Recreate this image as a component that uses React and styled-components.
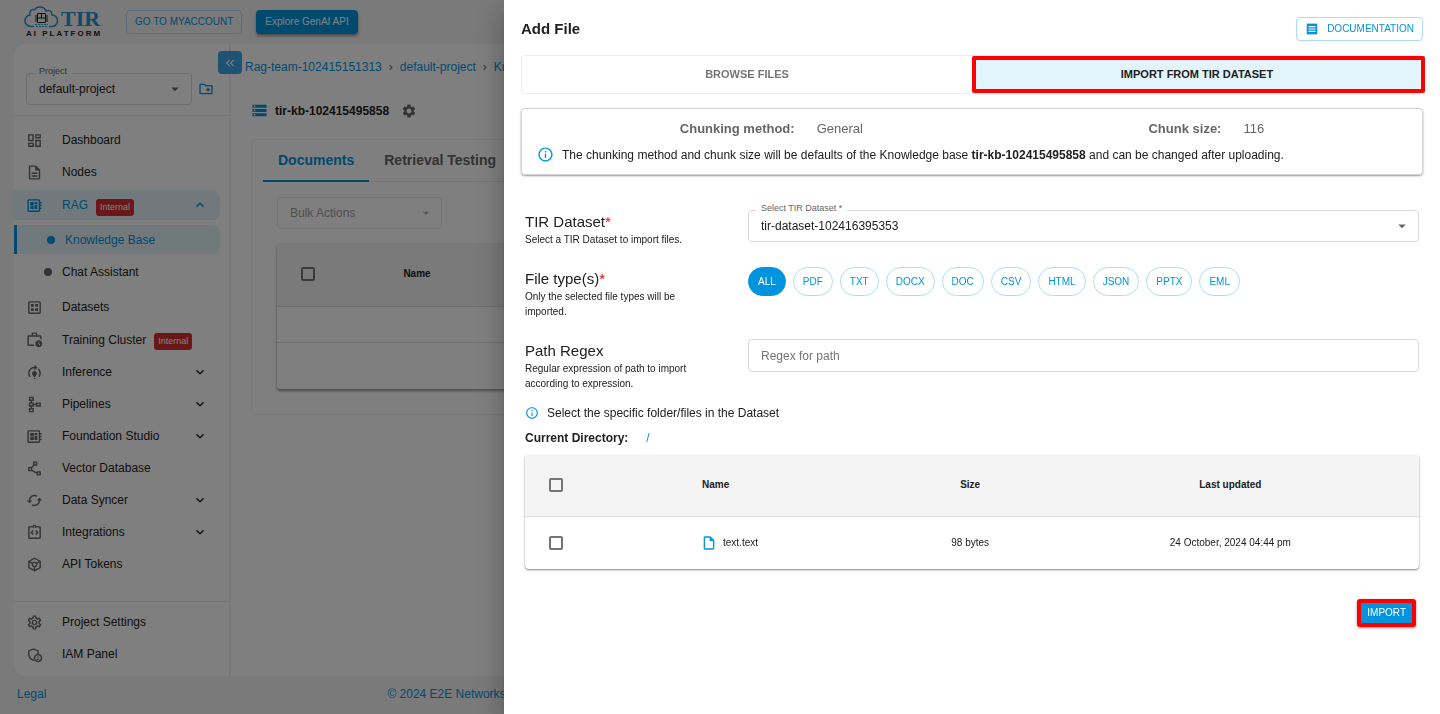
import React from "react";
import styled, { createGlobalStyle, css } from "styled-components";
import {
  MdArrowDropDown,
  MdCached,
  MdInfoOutline,
  MdKeyboardArrowDown,
  MdKeyboardArrowUp,
  MdKeyboardDoubleArrowLeft,
  MdModelTraining,
  MdOutlineAdminPanelSettings,
  MdOutlineCreateNewFolder,
  MdOutlineDashboard,
  MdOutlineDataset,
  MdOutlineDescription,
  MdOutlineDeveloperBoard,
  MdOutlineInsertDriveFile,
  MdOutlineIntegrationInstructions,
  MdOutlinePolyline,
  MdOutlineSchema,
  MdOutlineSettings,
  MdOutlineToken,
  MdOutlineWorkHistory,
  MdReceipt,
  MdSettings,
  MdStorage,
} from "react-icons/md";

const blue = "#0094de";
const ink = "#212121";
const muted = "#666666";
const line = "#e0e0e0";
const softLine = "#ebebeb";

const GlobalStyle = createGlobalStyle`
  *, *::before, *::after { box-sizing: border-box; }
  body {
    margin: 0;
    overflow: hidden;
    font-family: "Liberation Sans", Arial, sans-serif;
    font-size: 12px;
    line-height: 16px;
    color: ${ink};
    background: #f4f4f5;
  }
  button, input, select { font: inherit; color: inherit; margin: 0; }
  button { cursor: pointer; }
  a { color: ${blue}; text-decoration: none; }
  svg { display: block; flex: none; }
  h1, h2, h3, p { margin: 0; }
`;

/* ---------- page behind the drawer ---------- */

const Page = styled.div`
  display: flex;
  flex-direction: column;
  min-height: 100vh;
`;

const TopBar = styled.header`
  display: flex;
  align-items: center;
  height: 44px;
  padding-left: 24px;
`;

const Logo = styled.a`
  display: flex;
  flex-direction: column;
  width: 87px;
  margin-right: 15px;
  color: ${ink};
`;

const LogoTop = styled.span`
  display: flex;
  gap: 2px;
  height: 24px;
`;

const LogoWord = styled.span`
  font: bold 22px/26px "Liberation Serif", serif;
  color: #2a93cf;
`;

const LogoTagline = styled.span`
  padding-left: 2px;
  font-size: 8px;
  line-height: 8px;
  font-weight: bold;
  letter-spacing: 2px;
  white-space: nowrap;
`;

const OutlinedButton = styled.button`
  display: inline-flex;
  align-items: center;
  justify-content: center;
  gap: 8px;
  height: 24px;
  padding: 0 8px;
  border: 1px solid #b0dbf5;
  border-radius: 4px;
  background: transparent;
  color: ${blue};
  font-size: 10px;
`;

const FilledButton = styled.button`
  height: 24px;
  padding: 0 9px;
  border: 0;
  border-radius: 4px;
  background: ${blue};
  color: #ffffff;
  font-size: 10px;
  box-shadow: 0 2px 3px rgba(0, 0, 0, 0.4);
`;

const TopActions = styled.div`
  display: flex;
  gap: 14px;
`;

const Workspace = styled.div`
  display: flex;
  flex: 1;
  margin: 0 14px;
  border-radius: 10px;
  background: #ffffff;
`;

const Sidebar = styled.aside`
  position: relative;
  display: flex;
  flex-direction: column;
  width: 217px;
  border-right: 2px solid #f0f0f0;
`;

const CollapseButton = styled.button`
  position: absolute;
  top: 7px;
  right: -13px;
  display: grid;
  place-items: center;
  width: 24px;
  height: 23px;
  padding: 0;
  border: 0;
  border-radius: 4px;
  background: #3ca6e8;
  color: #ffffff;
`;

const ProjectBar = styled.div`
  display: flex;
  align-items: center;
  gap: 6px;
  padding: 29px 12px 10px;
  border-bottom: 1px solid ${softLine};
`;

const IconButton = styled.button`
  display: grid;
  place-items: center;
  padding: 0;
  border: 0;
  background: transparent;
  color: ${(p) => (p.$muted ? muted : blue)};
`;

const Field = styled.div`
  position: relative;
  display: flex;
  align-items: center;
  flex: ${(p) => (p.$width ? "none" : "1")};
  width: ${(p) => p.$width || "auto"};
  color: ${(p) => (p.$disabled ? "#b0b0b0" : muted)};

  svg {
    position: absolute;
    right: 8px;
    pointer-events: none;
  }
`;

const FieldLabel = styled.label`
  position: absolute;
  top: -10px;
  left: 8px;
  padding: 0 5px;
  background: #ffffff;
  color: ${muted};
  font-size: 9px;
`;

const controlStyle = css`
  width: 100%;
  height: 32px;
  padding: 0 12px;
  border: 1px solid ${(p) => (p.disabled ? "#ebebeb" : "#d8d8d8")};
  border-radius: 4px;
  background: transparent;
  outline: 0;
`;

const Select = styled.select`
  ${controlStyle}
  appearance: none;
  color: ${(p) => (p.disabled ? "#9e9e9e" : ink)};
  opacity: 1;
`;

const TextInput = styled.input`
  ${controlStyle}
  height: 33px;
  &::placeholder { color: #757575; opacity: 1; }
`;

const Nav = styled.nav`
  display: flex;
  flex-direction: column;
  padding: ${(p) => (p.$bottom ? "4px 0 6px" : "8px 0 21px")};
  border-top: ${(p) => (p.$bottom ? `1px solid ${softLine}` : "0")};
`;

const NavItem = styled.a`
  display: flex;
  align-items: center;
  height: ${(p) => (p.$tall ? "33px" : "32px")};
  padding: 0 12px;
  color: ${(p) => (p.$active ? blue : ink)};
  margin-right: 9px;

  > svg:first-child {
    width: 17px;
    height: 17px;
    margin-right: 19px;
    color: ${(p) => (p.$active ? blue : muted)};
  }
`;

const NavGroup = styled(NavItem)`
  height: 30px;
  margin-top: 2px;
  border-radius: 0 8px 8px 0;
  background: #e3f2fb;
`;

const SubItem = styled(NavItem)`
  height: ${(p) => (p.$active ? "29px" : "32px")};
  margin-top: ${(p) => (p.$active ? "5px" : "2px")};
  margin-bottom: ${(p) => (p.$active ? "0" : "3px")};
  padding-left: 30px;
  gap: 10px;
  ${(p) =>
    p.$active &&
    css`
      border-left: 3px solid ${blue};
      border-radius: 0 8px 8px 0;
      background: #e3f2fb;
    `}

  &::before {
    content: "";
    width: 8px;
    height: 8px;
    border-radius: 50%;
    background: ${(p) => (p.$active ? blue : muted)};
  }
`;

const Chevron = styled.span`
  margin-left: auto;
`;

const Badge = styled.span`
  margin: 4px 0 0 8px;
  padding: 0 4px;
  border-radius: 3px;
  background: #d32f2f;
  color: #ffffff;
  font-size: 9px;
  line-height: 17px;
`;

const Content = styled.main`
  flex: 1;
  min-width: 0;
  padding: 15px 14px 0;
`;

const Breadcrumbs = styled.nav`
  display: flex;
  gap: 7px;
  white-space: nowrap;

  span { color: ${muted}; }
`;

const TitleRow = styled.div`
  display: flex;
  align-items: center;
  gap: 7px;
  margin: 27px 6px 20px;
  font-weight: bold;
`;

const TitleText = styled.h1`
  margin-right: 5px;
  font-size: 12px;
`;

const Card = styled.section`
  margin-left: 6px;
  height: 276px;
  padding: 0 11px;
  border: 1px solid #f0f0f0;
  border-radius: 4px;
`;

const PageTabs = styled.div`
  display: flex;
  height: 42px;
  border-bottom: 1px solid ${softLine};
`;

const PageTab = styled.button`
  height: 42px;
  padding: 0 15px;
  border: 0;
  border-bottom: 2px solid ${(p) => (p.$active ? blue : "transparent")};
  background: transparent;
  color: ${(p) => (p.$active ? blue : muted)};
  font-size: 14px;
  font-weight: bold;
`;

const CardBody = styled.div`
  padding: 15px 14px;
`;

const DocumentsTable = styled.table`
  width: 100%;
  margin-top: 14px;
  border-collapse: collapse;
  table-layout: fixed;
  border-radius: 4px;
  box-shadow: 0 2px 3px rgba(0, 0, 0, 0.4);
  font-size: 10px;

  th { height: 63px; padding: 0; background: #f4f4f4; }
  th:first-child { width: 64px; }
  th:nth-child(2) { width: 152px; }
  td { height: 36px; border-top: 1px solid ${line}; }
  tr:last-child td { height: 47px; }
`;

const Checkbox = styled.input`
  display: block;
  appearance: none;
  width: 14px;
  height: 14px;
  margin: 0 0 0 24px;
  border: 2px solid #757575;
  border-radius: 2px;
  background: transparent;
  &:checked { background: ${blue}; border-color: ${blue}; }
`;

const Footer = styled.footer`
  display: flex;
  align-items: center;
  height: 38px;
  padding: 0 17px 3px;
  color: ${blue};

  span { margin-left: 341px; }
`;

/* ---------- drawer ---------- */

const Backdrop = styled.div`
  position: fixed;
  inset: 0;
  background: rgba(0, 0, 0, 0.5);
`;

const Drawer = styled.section`
  position: fixed;
  top: 0;
  right: 0;
  bottom: 0;
  width: 65%;
  padding: 0 17px;
  overflow: auto;
  background: #ffffff;
  box-shadow: 0 8px 10px -5px rgba(0, 0, 0, 0.2),
    0 16px 24px 2px rgba(0, 0, 0, 0.14), 0 6px 30px 5px rgba(0, 0, 0, 0.12);
`;

const DrawerHeader = styled.header`
  display: flex;
  align-items: center;
  justify-content: space-between;
  padding: 17px 0 14px;

  h2 { font-size: 15px; line-height: 20px; }
`;

const ImportTabs = styled.div`
  display: grid;
  grid-template-columns: 1fr 1fr;
  height: 39px;
  border: 1px solid #ececec;
  border-radius: 4px;
`;

const ImportTab = styled.button`
  position: relative;
  padding: 0 0 2px;
  border: 0;
  background: ${(p) => (p.$active ? "#e3f4fd" : "transparent")};
  color: ${(p) => (p.$active ? ink : "#757575")};
  font-size: 11px;
  font-weight: bold;

  ${(p) =>
    p.$active &&
    css`
      &::after {
        content: "";
        position: absolute;
        inset: 0 -3px 0 0;
        border: 4px solid #ff0000;
        border-radius: 2px;
      }
    `}
`;

const InfoCard = styled.div`
  margin-top: 14px;
  padding: 12px 15px 11px;
  border: 1px solid #d4d4d4;
  border-radius: 4px;
  box-shadow: 0 1px 2px rgba(0, 0, 0, 0.4);
`;

const ChunkRow = styled.dl`
  display: flex;
  justify-content: space-around;
  margin: 0 0 9px;
  color: ${muted};
  font-size: 13px;

  div { display: flex; gap: 22px; }
  dt { font-weight: bold; }
  dd { margin: 0; }
`;

const Note = styled.p`
  display: flex;
  align-items: center;
  gap: 8px;

  svg { color: ${blue}; }
`;

const Form = styled.form`
  display: flex;
  flex-direction: column;
  padding: 35px 4px 0;
`;

const FormRow = styled.div`
  display: grid;
  grid-template-columns: 223px 1fr;
  align-items: start;
  margin-bottom: 20px;
`;

const FormLabel = styled.div`
  padding-top: 2px;
  max-width: 180px;

  h3 { font-size: 15px; line-height: 20px; font-weight: normal; }
  h3 span { color: #ff0000; }
  p { font-size: 10px; line-height: 15px; }
`;

const Chips = styled.div`
  display: flex;
  flex-wrap: wrap;
  gap: 7px;
`;

const Chip = styled.button`
  height: 29px;
  padding: 0 9px;
  border: 1px solid ${(p) => (p.$active ? blue : "#b0dbf5")};
  border-radius: 15px;
  background: ${(p) => (p.$active ? blue : "#ffffff")};
  color: ${(p) => (p.$active ? "#ffffff" : blue)};
  font-size: 10px;
`;

const SelectNote = styled(Note)`
  margin-top: -6px;
`;

const Directory = styled.div`
  display: flex;
  gap: 18px;
  margin: 9px 0;
  font-weight: bold;

  a { font-weight: normal; }
`;

const FileTable = styled.table`
  width: 100%;
  border-collapse: collapse;
  table-layout: fixed;
  border-radius: 4px;
  overflow: hidden;
  box-shadow: 0 1px 2px rgba(0, 0, 0, 0.5);
  font-size: 10px;
  text-align: center;

  th { height: 61px; padding: 0; background: #f4f4f4; }
  td { height: 53px; padding: 0; border-top: 1px solid ${line}; }
  th:nth-child(1) { width: 177px; }
  th:nth-child(2) { width: 22%; }
  th:nth-child(3) { width: 16%; }
  th:nth-child(2), td:nth-child(2) { text-align: left; }
`;

const FileName = styled.span`
  display: flex;
  align-items: center;
  gap: 6px;

  svg { color: ${blue}; margin-left: -1px; }
`;

const FormActions = styled.div`
  display: flex;
  justify-content: flex-end;
  padding: 30px 3px;
`;

const ImportButton = styled.button`
  height: 28px;
  padding: 0 6px;
  border: 4px solid #ff0000;
  border-radius: 3px;
  background: ${blue};
  color: #ffffff;
  font-size: 10px;
  box-shadow: 0 1px 3px rgba(0, 0, 0, 0.4);
`;

const navItems = [
  { label: "Datasets", icon: MdOutlineDataset },
  { label: "Training Cluster", icon: MdOutlineWorkHistory, badge: true },
  { label: "Inference", icon: MdModelTraining, expands: true },
  { label: "Pipelines", icon: MdOutlineSchema, expands: true },
  { label: "Foundation Studio", icon: MdOutlineDeveloperBoard, expands: true },
  { label: "Vector Database", icon: MdOutlinePolyline },
  { label: "Data Syncer", icon: MdCached, expands: true },
  { label: "Integrations", icon: MdOutlineIntegrationInstructions, expands: true },
  { label: "API Tokens", icon: MdOutlineToken },
];

const fileTypes = ["ALL", "PDF", "TXT", "DOCX", "DOC", "CSV", "HTML", "JSON", "PPTX", "EML"];

function CloudMark() {
  return (
    <svg width="35" height="23" viewBox="0 0 35 23" fill="none">
      <path
        d="M10 20.500H7C3.500 20.500 1 18 1 15C1 11.500 3 9.500 6 9C5 5 7.500 3 11 3.500C13 0 20 0 22 5C25 3.500 28 5 28 9C31.500 9.500 33.500 12 33.500 15C33.500 18 31 20.500 28 20.500H25"
        stroke="#2a93cf"
        strokeWidth="1.500"
      />
      <path
        d="M13.500 7.500H21.500V16.500H13.500ZM13.500 12H21.500M17.500 7.500V12M12 9V16M23 9V16"
        stroke="#222222"
        strokeWidth="1"
      />
      <path d="M11 18.500H24M12 20.500H23" stroke="#2a93cf" strokeWidth="1" strokeDasharray="2 1" />
    </svg>
  );
}

function SideNavItem({ item }) {
  const Icon = item.icon;
  return (
    <NavItem href="#" $tall={item.badge}>
      <Icon />
      {item.label}
      {item.badge && <Badge>Internal</Badge>}
      {item.expands && (
        <Chevron>
          <MdKeyboardArrowDown size={16} />
        </Chevron>
      )}
    </NavItem>
  );
}

export default function App() {
  return (
    <>
      <GlobalStyle />
      <Page>
        <TopBar>
          <Logo href="#">
            <LogoTop>
              <CloudMark />
              <LogoWord>TIR</LogoWord>
            </LogoTop>
            <LogoTagline>AI PLATFORM</LogoTagline>
          </Logo>
          <TopActions>
            <OutlinedButton>GO TO MYACCOUNT</OutlinedButton>
            <FilledButton>Explore GenAI API</FilledButton>
          </TopActions>
        </TopBar>

        <Workspace>
          <Sidebar>
            <CollapseButton aria-label="Collapse sidebar">
              <MdKeyboardDoubleArrowLeft size={14} />
            </CollapseButton>
            <ProjectBar>
              <Field $width="166px">
                <FieldLabel htmlFor="project">Project</FieldLabel>
                <Select id="project">
                  <option>default-project</option>
                </Select>
                <MdArrowDropDown size={18} />
              </Field>
              <IconButton aria-label="Create project">
                <MdOutlineCreateNewFolder size={16} />
              </IconButton>
            </ProjectBar>
            <Nav>
              <SideNavItem item={{ label: "Dashboard", icon: MdOutlineDashboard }} />
              <SideNavItem item={{ label: "Nodes", icon: MdOutlineDescription }} />
              <NavGroup href="#" $active>
                <MdOutlineDeveloperBoard />
                RAG
                <Badge>Internal</Badge>
                <Chevron>
                  <MdKeyboardArrowUp size={16} />
                </Chevron>
              </NavGroup>
              <SubItem href="#" $active>Knowledge Base</SubItem>
              <SubItem href="#">Chat Assistant</SubItem>
              {navItems.map((item) => (
                <SideNavItem key={item.label} item={item} />
              ))}
            </Nav>
            <Nav $bottom>
              <SideNavItem item={{ label: "Project Settings", icon: MdOutlineSettings }} />
              <SideNavItem item={{ label: "IAM Panel", icon: MdOutlineAdminPanelSettings }} />
            </Nav>
          </Sidebar>

          <Content>
            <Breadcrumbs>
              <a href="#">Rag-team-102415151313</a>
              <span>›</span>
              <a href="#">default-project</a>
              <span>›</span>
              <a href="#">Knowledge Base</a>
            </Breadcrumbs>
            <TitleRow>
              <MdStorage size={17} color={blue} />
              <TitleText>tir-kb-102415495858</TitleText>
              <IconButton $muted aria-label="Settings">
                <MdSettings size={16} />
              </IconButton>
            </TitleRow>
            <Card>
              <PageTabs>
                <PageTab $active>Documents</PageTab>
                <PageTab>Retrieval Testing</PageTab>
              </PageTabs>
              <CardBody>
                <Field $width="165px" $disabled>
                  <Select disabled aria-label="Bulk Actions">
                    <option>Bulk Actions</option>
                  </Select>
                  <MdArrowDropDown size={16} />
                </Field>
                <DocumentsTable>
                  <thead>
                    <tr>
                      <th><Checkbox type="checkbox" aria-label="Select all documents" /></th>
                      <th>Name</th>
                      <th />
                    </tr>
                  </thead>
                  <tbody>
                    <tr><td colSpan={3} /></tr>
                    <tr><td colSpan={3} /></tr>
                  </tbody>
                </DocumentsTable>
              </CardBody>
            </Card>
          </Content>
        </Workspace>

        <Footer>
          <a href="#">Legal</a>
          <span>© 2024 E2E Networks</span>
        </Footer>
      </Page>

      <Backdrop />

      <Drawer role="dialog" aria-label="Add File">
        <DrawerHeader>
          <h2>Add File</h2>
          <OutlinedButton>
            <MdReceipt size={14} />
            DOCUMENTATION
          </OutlinedButton>
        </DrawerHeader>

        <ImportTabs role="tablist">
          <ImportTab role="tab">BROWSE FILES</ImportTab>
          <ImportTab role="tab" aria-selected="true" $active>IMPORT FROM TIR DATASET</ImportTab>
        </ImportTabs>

        <InfoCard>
          <ChunkRow>
            <div><dt>Chunking method:</dt><dd>General</dd></div>
            <div><dt>Chunk size:</dt><dd>116</dd></div>
          </ChunkRow>
          <Note>
            <MdInfoOutline size={17} />
            <span>
              The chunking method and chunk size will be defaults of the Knowledge base{" "}
              <b>tir-kb-102415495858</b> and can be changed after uploading.
            </span>
          </Note>
        </InfoCard>

        <Form onSubmit={(e) => e.preventDefault()}>
          <FormRow>
            <FormLabel>
              <h3>TIR Dataset<span>*</span></h3>
              <p>Select a TIR Dataset to import files.</p>
            </FormLabel>
            <Field>
              <FieldLabel htmlFor="dataset">Select TIR Dataset *</FieldLabel>
              <Select id="dataset">
                <option>tir-dataset-102416395353</option>
              </Select>
              <MdArrowDropDown size={18} />
            </Field>
          </FormRow>

          <FormRow>
            <FormLabel>
              <h3>File type(s)<span>*</span></h3>
              <p>Only the selected file types will be imported.</p>
            </FormLabel>
            <Chips>
              {fileTypes.map((type) => (
                <Chip key={type} type="button" $active={type === "ALL"}>{type}</Chip>
              ))}
            </Chips>
          </FormRow>

          <FormRow>
            <FormLabel>
              <h3><label htmlFor="regex">Path Regex</label></h3>
              <p>Regular expression of path to import according to expression.</p>
            </FormLabel>
            <TextInput id="regex" placeholder="Regex for path" />
          </FormRow>

          <SelectNote>
            <MdInfoOutline size={14} />
            Select the specific folder/files in the Dataset
          </SelectNote>
          <Directory>
            Current Directory: <a href="#">/</a>
          </Directory>

          <FileTable>
            <thead>
              <tr>
                <th><Checkbox type="checkbox" aria-label="Select all files" /></th>
                <th>Name</th>
                <th>Size</th>
                <th>Last updated</th>
              </tr>
            </thead>
            <tbody>
              <tr>
                <td><Checkbox type="checkbox" aria-label="Select text.text" /></td>
                <td>
                  <FileName>
                    <MdOutlineInsertDriveFile size={16} />
                    text.text
                  </FileName>
                </td>
                <td>98 bytes</td>
                <td>24 October, 2024 04:44 pm</td>
              </tr>
            </tbody>
          </FileTable>

          <FormActions>
            <ImportButton>IMPORT</ImportButton>
          </FormActions>
        </Form>
      </Drawer>
    </>
  );
}
